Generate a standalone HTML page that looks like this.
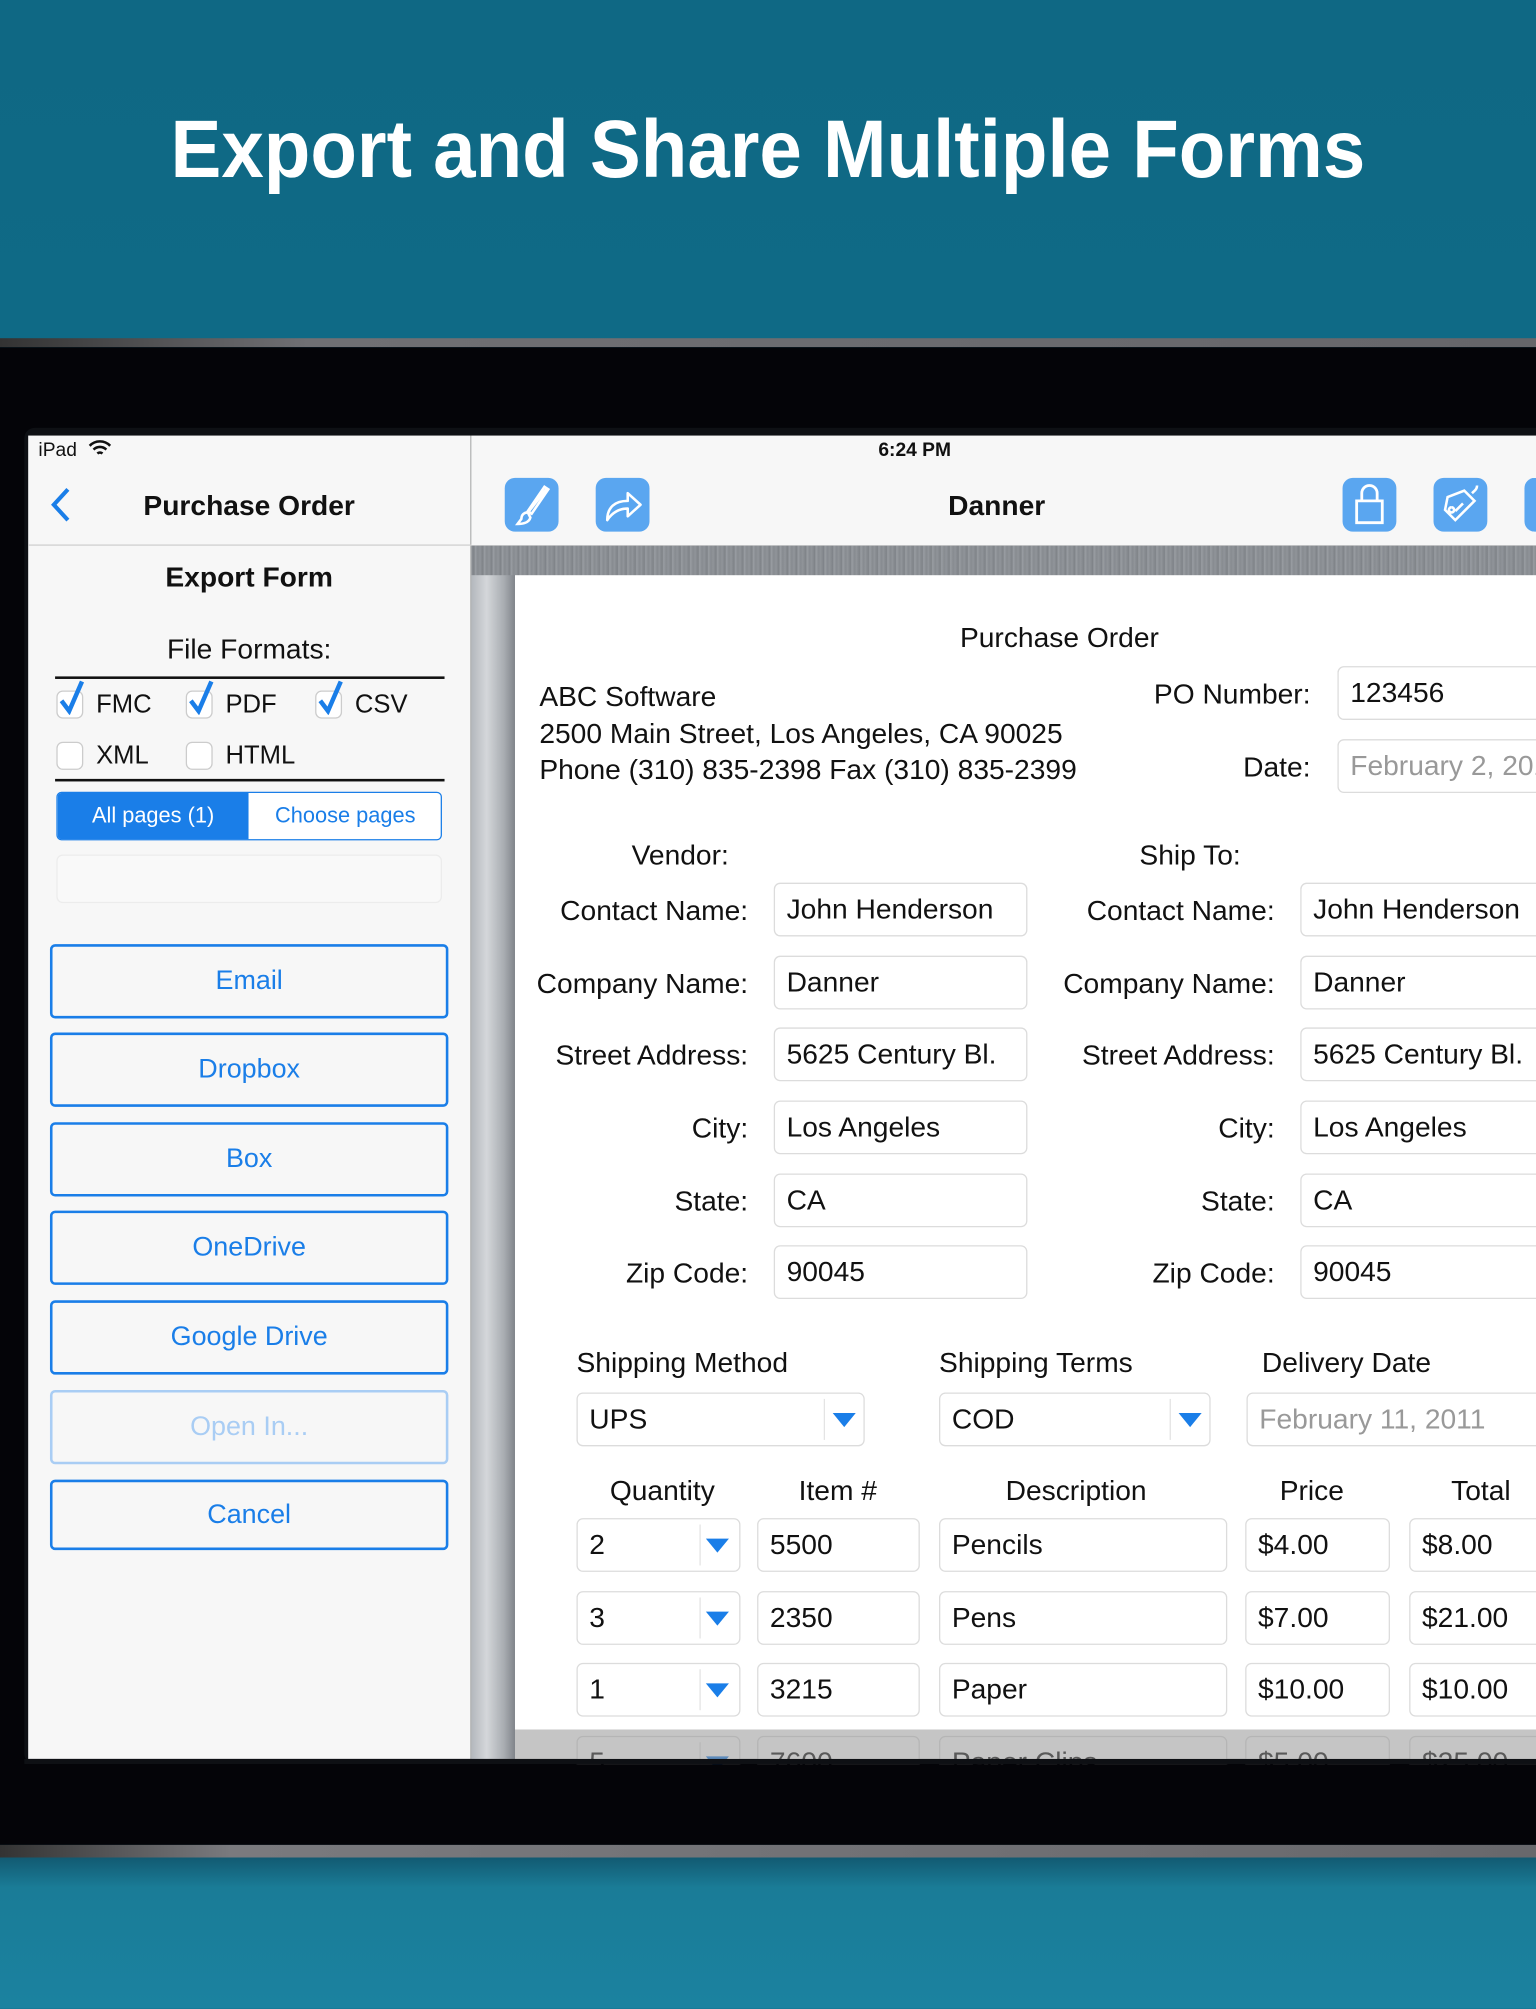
<!DOCTYPE html>
<html><head><meta charset="utf-8"><style>
*{margin:0;padding:0;box-sizing:border-box}
html,body{width:1536px;height:2008px;overflow:hidden;background:#0f6884}
#w{position:absolute;left:0;top:0;width:1199px;height:1568px;transform:scale(1.28107);transform-origin:0 0;font-family:"Liberation Sans",Arial,sans-serif;color:#111}
.a{position:absolute}
.t{position:absolute;white-space:nowrap;line-height:1}
.f{position:absolute;border:1px solid #dcdcdc;border-radius:5px;background:#fff;font-size:22px;padding-left:9px;display:flex;align-items:center;white-space:nowrap;overflow:hidden}
.lb{position:absolute;font-size:22px;text-align:right;white-space:nowrap}
.btn{position:absolute;left:39px;width:311px;height:58px;border:2px solid #1a7ee8;border-radius:4px;color:#1a7ee8;font-size:21px;display:flex;align-items:center;justify-content:center}
.dd{position:absolute;border-left:1px solid #e4e4e4;top:4px;bottom:4px}
.ar{position:absolute;width:0;height:0;border-left:9px solid transparent;border-right:9px solid transparent;border-top:11px solid #1a7ee8}
.ic{position:absolute;top:373px;width:42px;height:42px;border-radius:8px;background:#5aa6f0}
.cb{position:absolute;width:21px;height:22px;border:1px solid #ccc;border-radius:5px;background:#fff}
</style></head><body><div id="w">
<div class="a" style="left:0;top:0;width:1199px;height:264px;background:linear-gradient(180deg,#0f6884,#0f6a86)"></div>
<div class="a" style="left:0;top:264px;width:1199px;height:7px;background:linear-gradient(90deg,#333,#707074 20%,#66666a)"></div>
<div class="a" style="left:0;top:271px;width:1199px;height:1169px;background:#040408"></div>
<div class="a" style="left:0;top:1440px;width:1199px;height:10px;background:linear-gradient(90deg,#333,#7a7a7e 15%,#68686c)"></div>
<div class="a" style="left:0;top:1450px;width:1199px;height:118px;background:linear-gradient(180deg,#125a72,#1a7c97 20%,#1b82a0)"></div>
<div class="a" style="left:19px;top:334px;width:1180px;height:1043px;background:#0e1014;border-radius:8px 0 0 8px"></div>

<div class="t" style="left:0;width:1199px;top:84px;text-align:center;color:#fff;font-weight:bold;font-size:64px;"><span style="display:inline-block;transform:scaleX(0.93)">Export and Share Multiple Forms</span></div>

<div class="a" style="left:22px;top:340px;width:345px;height:1033px;background:#f7f7f7"></div>
<div class="a" style="left:367px;top:340px;width:1px;height:1033px;background:#d0d0d0"></div>
<div class="t" style="left:30px;top:344px;font-size:15px">iPad</div>
<svg class="a" style="left:69px;top:343px" width="18" height="14" viewBox="0 0 18 14"><path d="M1 5a11 11 0 0 1 16 0M4 8a7 7 0 0 1 10 0M7 11a3 3 0 0 1 4 0" stroke="#111" stroke-width="2" fill="none"/></svg>
<svg class="a" style="left:38px;top:380px" width="20" height="28" viewBox="0 0 20 28"><path d="M15 2L4 14l11 12" stroke="#1a7ee8" stroke-width="3.2" fill="none"/></svg>
<div class="t" style="left:22px;width:345px;text-align:center;top:384px;font-size:22px;font-weight:bold;color:#111">Purchase Order</div>
<div class="a" style="left:22px;top:425px;width:346px;height:1px;background:#cfcfcf"></div>
<div class="t" style="left:22px;width:345px;text-align:center;top:440px;font-size:22px;font-weight:bold;color:#111">Export Form</div>
<div class="t" style="left:22px;width:345px;text-align:center;top:496px;font-size:22px">File Formats:</div>
<div class="a" style="left:43px;top:528px;width:304px;height:2px;background:#111"></div>
<div class="cb" style="left:44px;top:539px"></div><div class="cb" style="left:145px;top:539px"></div><div class="cb" style="left:246px;top:539px"></div>
<svg class="a" style="left:44px;top:530px" width="24" height="28" viewBox="0 0 24 28"><path d="M4 17l6 8L20 2" stroke="#1a7ee8" stroke-width="3.5" fill="none"/></svg>
<svg class="a" style="left:145px;top:530px" width="24" height="28" viewBox="0 0 24 28"><path d="M4 17l6 8L20 2" stroke="#1a7ee8" stroke-width="3.5" fill="none"/></svg>
<svg class="a" style="left:246px;top:530px" width="24" height="28" viewBox="0 0 24 28"><path d="M4 17l6 8L20 2" stroke="#1a7ee8" stroke-width="3.5" fill="none"/></svg>
<div class="t" style="left:75px;top:540px;font-size:20px">FMC</div>
<div class="t" style="left:176px;top:540px;font-size:20px">PDF</div>
<div class="t" style="left:277px;top:540px;font-size:20px">CSV</div>
<div class="cb" style="left:44px;top:579px"></div><div class="cb" style="left:145px;top:579px"></div>
<div class="t" style="left:75px;top:580px;font-size:20px">XML</div>
<div class="t" style="left:176px;top:580px;font-size:20px">HTML</div>
<div class="a" style="left:43px;top:608px;width:304px;height:2px;background:#111"></div>
<div class="a" style="left:44px;top:618px;width:301px;height:38px;border:1.5px solid #1a7ee8;border-radius:4px;background:#fff;overflow:hidden">
<div class="a" style="left:0;top:0;width:149px;height:38px;background:#1a7ee8"></div>
<div class="t" style="left:0;width:149px;text-align:center;top:9px;font-size:17px;color:#fff">All pages (1)</div>
<div class="t" style="left:149px;width:151px;text-align:center;top:9px;font-size:17px;color:#1a7ee8">Choose pages</div></div>
<div class="a" style="left:44px;top:667px;width:301px;height:38px;border:1px solid #ececec;border-radius:5px;background:#f9f9f9"></div>
<div class="btn" style="top:737px">Email</div>
<div class="btn" style="top:806px">Dropbox</div>
<div class="btn" style="top:876px">Box</div>
<div class="btn" style="top:945px">OneDrive</div>
<div class="btn" style="top:1015px">Google Drive</div>
<div class="btn" style="top:1085px;border-color:#a9cdf4;color:#a9cdf4">Open In...</div>
<div class="btn" style="top:1155px;height:55px">Cancel</div>

<div class="a" style="left:368px;top:340px;width:831px;height:86px;background:#f7f7f7"></div>
<div class="t" style="left:614px;width:200px;text-align:center;top:344px;font-size:15px;font-weight:bold">6:24 PM</div>
<div class="t" style="left:678px;width:200px;text-align:center;top:384px;font-size:22px;font-weight:bold">Danner</div>
<div class="ic" style="left:394px"><svg width="42" height="42" viewBox="0 0 42 42"><path d="M33 8L19 26M31 7l3 2-13 19-3-2zM18 27c-3 0-5 2-5 5l-3 4c4 0 9-1 10-5z" stroke="#fff" stroke-width="2" fill="none"/></svg></div>
<div class="ic" style="left:465px"><svg width="42" height="42" viewBox="0 0 42 42"><path d="M9 33c0-10 6-15 16-15v-6l10 9-10 9v-6c-7 0-12 3-16 9z" stroke="#fff" stroke-width="2" fill="none" stroke-linejoin="round"/></svg></div>
<div class="ic" style="left:1048px"><svg width="42" height="42" viewBox="0 0 42 42"><path d="M15 18v-6a6 6 0 0 1 12 0v6M11 18h20v17H11z" stroke="#fff" stroke-width="2.2" fill="none"/></svg></div>
<div class="ic" style="left:1119px"><svg width="42" height="42" viewBox="0 0 42 42"><path d="M24 10l8 8-15 15-8-8 2-10zM14 23a2 2 0 1 0 .1 0M17 26l6-6M30 12c2-2 4-3 4-6" stroke="#fff" stroke-width="2" fill="none"/></svg></div>
<div class="ic" style="left:1190px"></div>

<div class="a" style="left:368px;top:426px;width:831px;height:947px;background:repeating-linear-gradient(90deg,#8d9196 0,#7f8388 2px,#999da2 3px,#878b90 5px,#92969b 7px)"></div>
<div class="a" style="left:368px;top:449px;width:34px;height:924px;background:linear-gradient(90deg,#b4b8bd,#d4d7da 35%,#a8acb1 75%,#80848a)"></div>
<div class="a" style="left:402px;top:449px;width:797px;height:924px;background:#fff"></div>

<div class="t" style="left:627px;width:400px;text-align:center;top:487px;font-size:22px">Purchase Order</div>
<div class="t" style="left:421px;top:530px;font-size:22px;line-height:28.5px">ABC Software<br>2500 Main Street, Los Angeles, CA 90025<br>Phone (310) 835-2398 Fax (310) 835-2399</div>
<div class="lb" style="right:176px;top:529px">PO Number:</div>
<div class="f" style="left:1044px;top:520px;width:170px;height:42px">123456</div>
<div class="lb" style="right:176px;top:586px">Date:</div>
<div class="f" style="left:1044px;top:577px;width:170px;height:42px;color:#999">February 2, 2011</div>
<div class="t" style="left:431px;width:200px;text-align:center;top:657px;font-size:22px">Vendor:</div>
<div class="t" style="left:829px;width:200px;text-align:center;top:657px;font-size:22px">Ship To:</div>

<div class="lb" style="right:615px;top:698px">Contact Name:</div><div class="f" style="left:604px;top:689px;width:198px;height:42px">John Henderson</div>
<div class="lb" style="right:615px;top:755px">Company Name:</div><div class="f" style="left:604px;top:746px;width:198px;height:42px">Danner</div>
<div class="lb" style="right:615px;top:811px">Street Address:</div><div class="f" style="left:604px;top:802px;width:198px;height:42px">5625 Century Bl.</div>
<div class="lb" style="right:615px;top:868px">City:</div><div class="f" style="left:604px;top:859px;width:198px;height:42px">Los Angeles</div>
<div class="lb" style="right:615px;top:925px">State:</div><div class="f" style="left:604px;top:916px;width:198px;height:42px">CA</div>
<div class="lb" style="right:615px;top:981px">Zip Code:</div><div class="f" style="left:604px;top:972px;width:198px;height:42px">90045</div>

<div class="lb" style="right:204px;top:698px">Contact Name:</div><div class="f" style="left:1015px;top:689px;width:200px;height:42px">John Henderson</div>
<div class="lb" style="right:204px;top:755px">Company Name:</div><div class="f" style="left:1015px;top:746px;width:200px;height:42px">Danner</div>
<div class="lb" style="right:204px;top:811px">Street Address:</div><div class="f" style="left:1015px;top:802px;width:200px;height:42px">5625 Century Bl.</div>
<div class="lb" style="right:204px;top:868px">City:</div><div class="f" style="left:1015px;top:859px;width:200px;height:42px">Los Angeles</div>
<div class="lb" style="right:204px;top:925px">State:</div><div class="f" style="left:1015px;top:916px;width:200px;height:42px">CA</div>
<div class="lb" style="right:204px;top:981px">Zip Code:</div><div class="f" style="left:1015px;top:972px;width:200px;height:42px">90045</div>

<div class="t" style="left:450px;top:1053px;font-size:22px">Shipping Method</div>
<div class="t" style="left:733px;top:1053px;font-size:22px">Shipping Terms</div>
<div class="t" style="left:985px;top:1053px;font-size:22px">Delivery Date</div>
<div class="f" style="left:450px;top:1087px;width:225px;height:42px">UPS<div class="dd" style="left:192px"></div><div class="ar" style="left:199px;top:15px"></div></div>
<div class="f" style="left:733px;top:1087px;width:212px;height:42px">COD<div class="dd" style="left:179px"></div><div class="ar" style="left:186px;top:15px"></div></div>
<div class="f" style="left:973px;top:1087px;width:240px;height:42px;color:#999">February 11, 2011</div>

<div class="t" style="left:437px;width:160px;text-align:center;top:1153px;font-size:22px">Quantity</div>
<div class="t" style="left:594px;width:120px;text-align:center;top:1153px;font-size:22px">Item #</div>
<div class="t" style="left:740px;width:200px;text-align:center;top:1153px;font-size:22px">Description</div>
<div class="t" style="left:964px;width:120px;text-align:center;top:1153px;font-size:22px">Price</div>
<div class="t" style="left:1096px;width:120px;text-align:center;top:1153px;font-size:22px">Total</div>

<div class="f" style="left:450px;top:1185px;width:128px;height:42px">2<div class="dd" style="left:95px"></div><div class="ar" style="left:100px;top:15px"></div></div>
<div class="f" style="left:591px;top:1185px;width:127px;height:42px">5500</div>
<div class="f" style="left:733px;top:1185px;width:225px;height:42px">Pencils</div>
<div class="f" style="left:972px;top:1185px;width:113px;height:42px">$4.00</div>
<div class="f" style="left:1100px;top:1185px;width:115px;height:42px">$8.00</div>

<div class="f" style="left:450px;top:1242px;width:128px;height:42px">3<div class="dd" style="left:95px"></div><div class="ar" style="left:100px;top:15px"></div></div>
<div class="f" style="left:591px;top:1242px;width:127px;height:42px">2350</div>
<div class="f" style="left:733px;top:1242px;width:225px;height:42px">Pens</div>
<div class="f" style="left:972px;top:1242px;width:113px;height:42px">$7.00</div>
<div class="f" style="left:1100px;top:1242px;width:115px;height:42px">$21.00</div>

<div class="f" style="left:450px;top:1298px;width:128px;height:42px">1<div class="dd" style="left:95px"></div><div class="ar" style="left:100px;top:15px"></div></div>
<div class="f" style="left:591px;top:1298px;width:127px;height:42px">3215</div>
<div class="f" style="left:733px;top:1298px;width:225px;height:42px">Paper</div>
<div class="f" style="left:972px;top:1298px;width:113px;height:42px">$10.00</div>
<div class="f" style="left:1100px;top:1298px;width:115px;height:42px">$10.00</div>

<div class="f" style="left:450px;top:1355px;width:128px;height:42px">5<div class="dd" style="left:95px"></div><div class="ar" style="left:100px;top:15px"></div></div>
<div class="f" style="left:591px;top:1355px;width:127px;height:42px">7600</div>
<div class="f" style="left:733px;top:1355px;width:225px;height:42px">Paper Clips</div>
<div class="f" style="left:972px;top:1355px;width:113px;height:42px">$5.00</div>
<div class="f" style="left:1100px;top:1355px;width:115px;height:42px">$25.00</div>
<div class="a" style="left:402px;top:1350px;width:797px;height:23px;background:rgba(150,150,150,0.55)"></div>
<div class="a" style="left:19px;top:1373px;width:1180px;height:4px;background:#0e1014"></div>
<div class="a" style="left:0;top:1377px;width:1199px;height:63px;background:#040408"></div>
</div></body></html>
